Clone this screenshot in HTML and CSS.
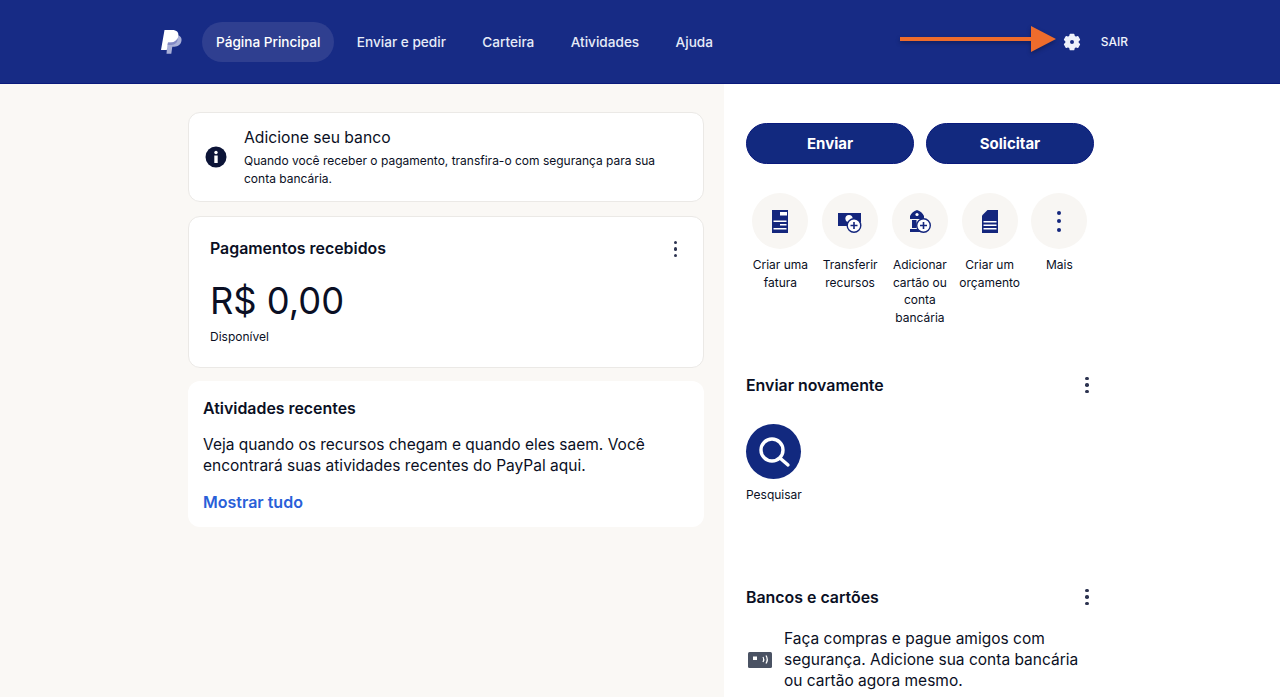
FILE: index.html
```html
<!DOCTYPE html>
<html lang="pt-BR">
<head>
    <meta charset="UTF-8">
    <meta name="viewport" content="width=device-width, initial-scale=1.0">
    <title>PayPal</title>
    <link rel="stylesheet" href="styles.css">
</head>
<body>
    <header class="topbar">
        <svg class="logo" width="22" height="26" viewBox="0 0 22 26">
            <path d="M8 6h7.500c4 0 6.500 2 6 5.600-.5 4-3.400 6.200-7.200 6.200h-2l-1 7H6.500z" fill="#a9b0d8"/>
            <path d="M4.500 1h7.800c4.200 0 6.700 2.200 6 6-.7 4.200-3.800 6.600-8 6.600H8L6.800 21H1z" fill="#fff"/>
            <path d="M8 13.600h2.300c3.400 0 6-1.600 7.300-4.300.6 3.700-2.400 6.700-6.500 6.700H7.600z" fill="#8289c4"/>
        </svg>
        <nav class="nav">
            <a class="nav-item active">Página Principal</a>
            <a class="nav-item">Enviar e pedir</a>
            <a class="nav-item">Carteira</a>
            <a class="nav-item">Atividades</a>
            <a class="nav-item">Ajuda</a>
        </nav>
        <svg class="gear" width="18" height="18" viewBox="0 0 18 18">
            <path fill-rule="evenodd" fill="#eef2fb" stroke="#eef2fb" stroke-width="1.400" stroke-linejoin="round" d="M7.300 1.500h3.400l.5 1.900 1.600.9 1.900-.6 1.700 3-1.400 1.300v2l1.400 1.300-1.700 3-1.900-.6-1.600.9-.5 1.900H7.300l-.5-1.900-1.600-.9-1.900.6-1.700-3 1.400-1.300V8L1.600 6.700l1.700-3 1.900.6 1.600-.9zM9 6.300a2.700 2.700 0 1 0 0 5.400 2.700 2.700 0 0 0 0-5.400z"/>
        </svg>
        <a class="logout">SAIR</a>
        <svg class="arrow" width="156" height="26" viewBox="0 0 156 26">
            <path d="M0 11h131V0l25 13-25 13V15H0z" fill="#ee6c2c"/>
        </svg>
    </header>

    <main class="page">
        <section class="left">
            <div class="card notice">
                <svg class="info" width="22" height="22" viewBox="0 0 22 22">
                    <circle cx="11" cy="11" r="10.500" fill="#0c1437"/>
                    <circle cx="11" cy="6.500" r="1.700" fill="#fff"/>
                    <path d="M9.300 9.500h3.400v7.500H9.300z" fill="#fff"/>
                </svg>
                <div>
                    <h3 class="notice-title">Adicione seu banco</h3>
                    <p class="notice-text">Quando você receber o pagamento, transfira-o com segurança para sua conta bancária.</p>
                </div>
            </div>

            <div class="card balance">
                <div class="row-head">
                    <h2 class="heading">Pagamentos recebidos</h2>
                    <span class="dots"><i></i><i></i><i></i></span>
                </div>
                <div class="amount">R$ 0,00</div>
                <div class="amount-label">Disponível</div>
            </div>

            <div class="recent">
                <h2 class="heading">Atividades recentes</h2>
                <p class="recent-text">Veja quando os recursos chegam e quando eles saem. Você encontrará suas atividades recentes do PayPal aqui.</p>
                <a class="show-all">Mostrar tudo</a>
            </div>
        </section>

        <aside class="right">
            <div class="buttons">
                <button class="btn">Enviar</button>
                <button class="btn">Solicitar</button>
            </div>

            <div class="actions">
                <div class="action">
                    <span class="circle">
                        <svg width="16" height="23" viewBox="0 0 16 23">
                            <path fill="#14267d" d="M0 0h16v23H0z"/>
                            <path fill="#fff" d="M8 2h7v3.500H8zM1.500 10.500h13V12h-13zM8 14h6.500v1.500H8zM1.500 18h13v1.500h-13z"/>
                        </svg>
                    </span>
                    <span class="action-label">Criar uma fatura</span>
                </div>
                <div class="action">
                    <span class="circle">
                        <svg class="icon-low" width="24" height="20" viewBox="0 0 24 20">
                            <path fill="#14267d" d="M0 0h23v9l-4 4H0z"/>
                            <circle cx="11" cy="5.500" r="3.600" fill="#fff"/>
                            <circle cx="16" cy="12.500" r="6.800" fill="#fff" stroke="#14267d" stroke-width="1.400"/>
                            <path fill="#14267d" d="M15.200 9h1.600v2.700h2.700v1.600h-2.700V16h-1.600v-2.700h-2.700v-1.600h2.700z"/>
                        </svg>
                    </span>
                    <span class="action-label">Transferir recursos</span>
                </div>
                <div class="action">
                    <span class="circle">
                        <svg class="icon-right" width="21" height="23" viewBox="0 0 21 23">
                            <path fill="#14267d" d="M0 6Q2 1.500 7 0q5 1.500 7 6v3H0zM2 10h4.500v8H2zM0 19h11v3H0z"/>
                            <circle cx="7" cy="4.500" r="1.600" fill="#fff"/>
                            <circle cx="13.500" cy="15.500" r="6.800" fill="#fff" stroke="#14267d" stroke-width="1.400"/>
                            <path fill="#14267d" d="M12.700 12h1.600v2.700H17v1.600h-2.700V19h-1.600v-2.700H10v-1.600h2.700z"/>
                        </svg>
                    </span>
                    <span class="action-label">Adicionar cartão ou conta bancária</span>
                </div>
                <div class="action">
                    <span class="circle">
                        <svg width="16" height="23" viewBox="0 0 16 23">
                            <path fill="#14267d" d="M5.500 0H16v23H0V5.500z"/>
                            <path fill="#fff" d="M1.500 11h13v1.500h-13zM1.500 14.500h13V16h-13zM1.500 18h13v1.500h-13z"/>
                        </svg>
                    </span>
                    <span class="action-label">Criar um orçamento</span>
                </div>
                <div class="action">
                    <span class="circle">
                        <span class="dots dots-big"><i></i><i></i><i></i></span>
                    </span>
                    <span class="action-label">Mais</span>
                </div>
            </div>

            <div class="row-head again-head">
                <h2 class="heading">Enviar novamente</h2>
                <span class="dots"><i></i><i></i><i></i></span>
            </div>
            <div class="search">
                <span class="search-circle">
                    <svg width="36" height="36" viewBox="0 0 36 36">
                        <circle cx="16" cy="16" r="11" fill="none" stroke="#fff" stroke-width="3.400"/>
                        <path d="M24.500 24.500 32 31" stroke="#fff" stroke-width="3.400" stroke-linecap="round"/>
                    </svg>
                </span>
                <span class="search-label">Pesquisar</span>
            </div>

            <div class="row-head banks-head">
                <h2 class="heading">Bancos e cartões</h2>
                <span class="dots"><i></i><i></i><i></i></span>
            </div>
            <div class="banks">
                <svg class="banks-icon" width="24" height="16" viewBox="0 0 24 16">
                    <rect width="24" height="16" rx="1.500" fill="#4a5263"/>
                    <rect x="5" y="4.500" width="4" height="3.500" fill="#fff"/>
                    <path d="M15 5q1.500 2.500 0 5M18 3.500q2.500 4 0 8" fill="none" stroke="#fff" stroke-width="1.300"/>
                </svg>
                <p class="banks-text">Faça compras e pague amigos com segurança. Adicione sua conta bancária ou cartão agora mesmo.</p>
            </div>
        </aside>
    </main>
</body>
</html>
```

FILE: styles.css
```css
* {
    box-sizing: border-box;
}
html, body {
    height: 100%;
}
body {
    margin: 0;
    overflow: hidden;
    background-color: #faf8f5;
    color: #0a0f24;
    font-family: 'Inter', 'Liberation Sans', sans-serif;
}
h2, h3, p {
    margin: 0;
}

/* barra superior */
.topbar {
    position: relative;
    display: flex;
    align-items: center;
    height: 84px;
    padding: 0 152px 0 160px;
    background-color: #172b85;
    border-bottom: 1px solid #0a1a7c;
}
.logo {
    flex: none;
    margin-right: 20px;
}
.nav {
    display: flex;
    align-items: center;
    gap: 8.400px;
    flex: 1;
}
.nav-item {
    padding: 11px 14px;
    border-radius: 20px;
    color: #e6ebf8;
    font-size: 13.600px;
    font-weight: 500;
    line-height: 18px;
}
.nav-item.active {
    background-color: #2f3f90;
    color: #fff;
}
.gear {
    flex: none;
    margin-right: 20px;
}
.logout {
    color: #eef2fb;
    font-size: 12px;
    font-weight: 500;
}
.arrow {
    position: absolute;
    left: 900px;
    top: 26px;
    filter: drop-shadow(0 2px 2px rgba(0, 0, 0, 0.3));
}

.page {
    display: flex;
    height: 613px;
}

/* coluna esquerda */
.left {
    flex: none;
    width: 724px;
    padding: 28px 20px 0 188px;
}
.card {
    background-color: #fff;
    border: 1px solid #ebe9e6;
    border-radius: 12px;
}
.notice {
    display: flex;
    align-items: center;
    gap: 17px;
    height: 90px;
    padding: 0 24px 0 16px;
    margin-bottom: 14px;
}
.info {
    flex: none;
}
.notice-title {
    font-size: 15.700px;
    font-weight: 400;
    line-height: 20px;
    margin: 1px 0 4px;
}
.notice-text {
    font-size: 12px;
    line-height: 17.500px;
}
.balance {
    height: 152px;
    padding: 22px 21px 0;
    margin-bottom: 13px;
}
.row-head {
    display: flex;
    justify-content: space-between;
    align-items: center;
}
.heading {
    font-size: 15.900px;
    font-weight: 600;
    line-height: 20px;
}
.dots {
    display: flex;
    flex-direction: column;
    gap: 3px;
    margin-right: 5px;
}
.right .row-head .dots {
    margin: -2px 5.500px 0 0;
}
.dots i {
    width: 3.500px;
    height: 3.500px;
    border-radius: 50%;
    background-color: #2c3350;
}
.dots-big {
    gap: 4.500px;
    margin: 0;
}
.dots-big i {
    width: 4px;
    height: 4px;
    background-color: #14267d;
}
.amount {
    margin-top: 20px;
    font-size: 36.300px;
    font-weight: 400;
    line-height: 44px;
}
.amount-label {
    margin-top: 6px;
    font-size: 12px;
    line-height: 16px;
}
.recent {
    height: 146px;
    padding: 18px 15px 0;
    background-color: #fff;
    border-radius: 12px;
}
.recent-text {
    margin-top: 15px;
    font-size: 15.500px;
    line-height: 21px;
}
.show-all {
    display: block;
    margin-top: 16px;
    color: #2a5fd8;
    font-size: 16px;
    font-weight: 600;
    line-height: 20px;
}

/* coluna direita */
.right {
    flex: 1;
    min-width: 0;
    padding: 39px 186px 0 22px;
    background-color: #fff;
}
.buttons {
    display: flex;
    gap: 12px;
}
.btn {
    flex: 1;
    height: 41px;
    border: 1px solid #0a1a7c;
    border-radius: 21px;
    background-color: #12297f;
    color: #fff;
    font-family: inherit;
    font-size: 15px;
    font-weight: 700;
}
.actions {
    display: flex;
    margin: 29px 0 0 -0.500px;
}
.action {
    display: flex;
    flex-direction: column;
    align-items: center;
    flex: none;
    width: 69.750px;
    height: 133px;
}
.circle {
    display: flex;
    align-items: center;
    justify-content: center;
    flex: none;
    width: 56px;
    height: 56px;
    margin-bottom: 7px;
    border-radius: 50%;
    background-color: #f8f6f3;
}
.icon-low {
    margin-top: 3px;
}
.icon-right {
    margin-left: 2px;
}
.action-label {
    width: 66px;
    font-size: 12px;
    line-height: 17.500px;
    text-align: center;
}
.again-head {
    margin-top: 50px;
}
.search {
    display: flex;
    flex-direction: column;
    align-items: flex-start;
    margin-top: 28px;
    height: 164px;
}
.search-circle {
    display: flex;
    align-items: center;
    justify-content: center;
    width: 55px;
    height: 55px;
    margin-bottom: 8px;
    border-radius: 50%;
    background-color: #12297f;
}
.search-label {
    font-size: 12px;
    line-height: 16px;
}
.banks {
    display: flex;
    align-items: center;
    gap: 12px;
    margin-top: 20px;
    padding-left: 2px;
}
.banks-icon {
    flex: none;
}
.banks-text {
    font-size: 15.500px;
    line-height: 21px;
}
```
